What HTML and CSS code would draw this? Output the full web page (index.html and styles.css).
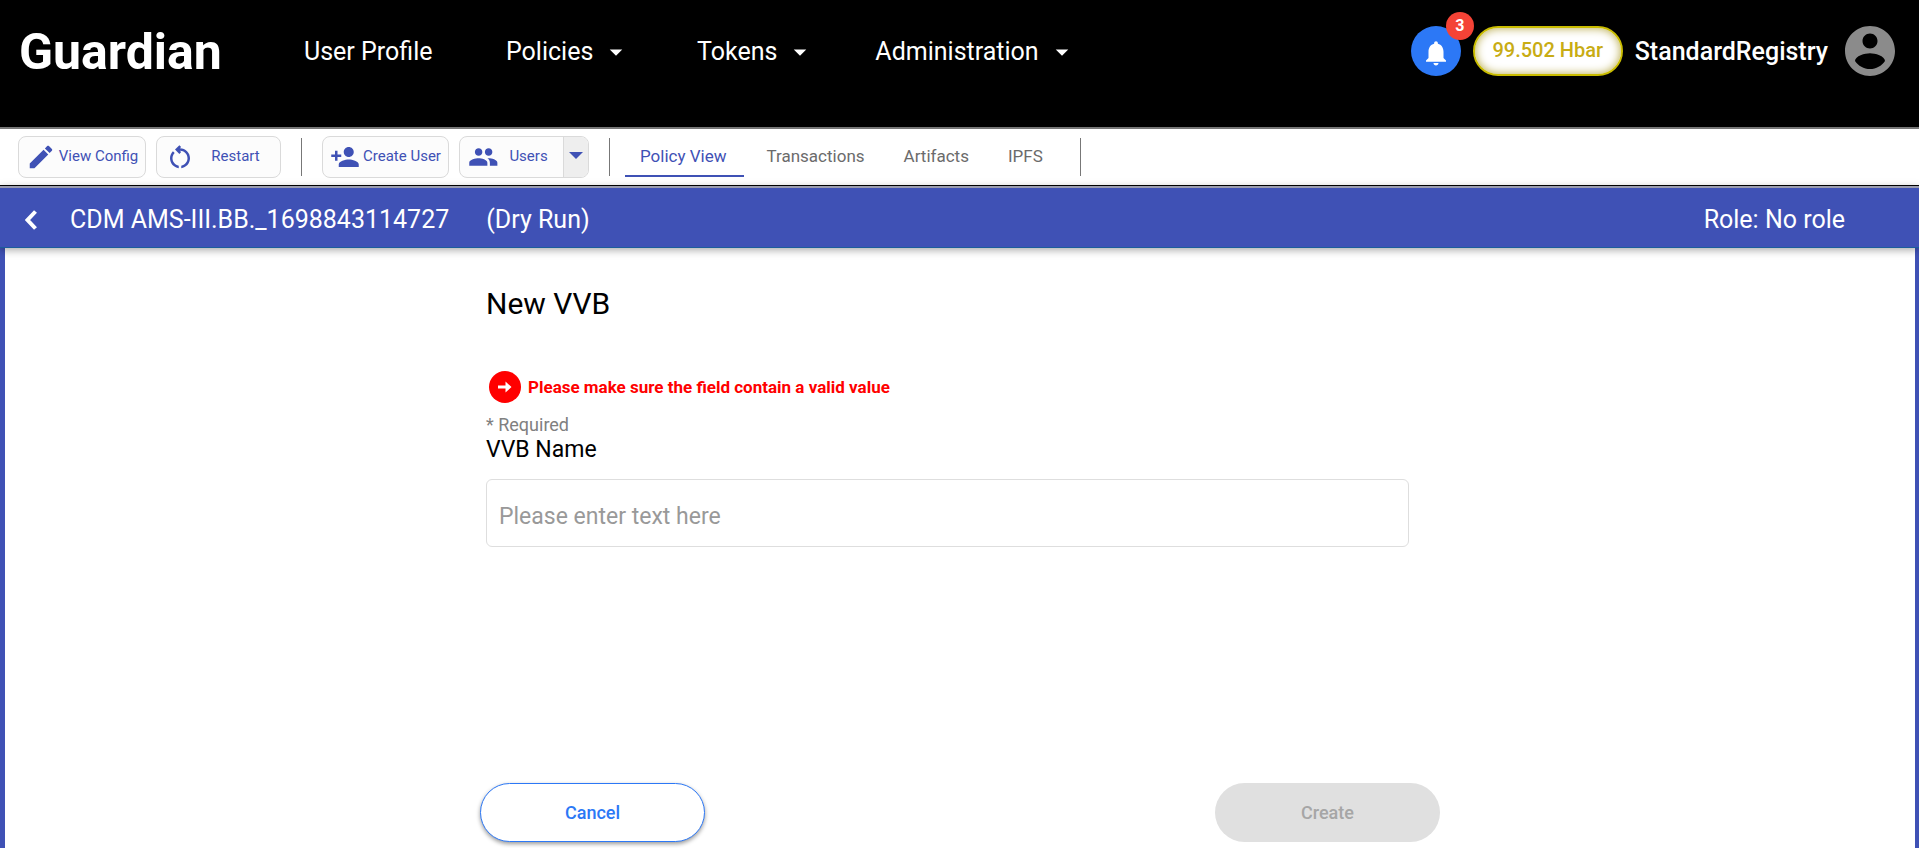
FILE: index.html
```html
<!DOCTYPE html>
<html lang="en">
<head>
<meta charset="utf-8">
<title>Guardian</title>
<link rel="stylesheet" href="styles.css">
</head>
<body>
<header class="header">
  <a class="logo" href="#">Guardian</a>
  <nav class="nav">
    <a class="nav-link nav-profile" href="#">User Profile</a>
    <button class="nav-link nav-policies" type="button">Policies<svg class="caret" viewBox="0 0 24 24"><path d="M7 10l5 5 5-5z"/></svg></button>
    <button class="nav-link" type="button">Tokens<svg class="caret" viewBox="0 0 24 24"><path d="M7 10l5 5 5-5z"/></svg></button>
    <button class="nav-link" type="button">Administration<svg class="caret" viewBox="0 0 24 24"><path d="M7 10l5 5 5-5z"/></svg></button>
  </nav>
  <div class="account">
    <button class="bell" type="button" aria-label="Notifications">
      <svg class="bell-icon" viewBox="0 0 24 24"><path d="M12 22c1.100 0 2-.900 2-2h-4c0 1.100.890 2 2 2zm6-6v-5c0-3.070-1.640-5.640-4.500-6.320V4c0-.830-.670-1.500-1.500-1.500s-1.500.670-1.500 1.500v.680C7.630 5.360 6 7.920 6 11v5l-2 2v1h16v-1l-2-2z"/></svg>
      <span class="badge">3</span>
    </button>
    <span class="balance">99.502 Hbar</span>
    <span class="username">StandardRegistry</span>
    <button class="avatar" type="button" aria-label="Profile">
      <svg viewBox="2 2 20 20"><path d="M12 2C6.480 2 2 6.480 2 12s4.480 10 10 10 10-4.480 10-10S17.520 2 12 2zm0 3c1.660 0 3 1.340 3 3s-1.340 3-3 3-3-1.340-3-3 1.340-3 3-3zm0 14.200c-2.500 0-4.710-1.280-6-3.220.030-1.990 4-3.080 6-3.080 1.990 0 5.970 1.090 6 3.080-1.290 1.940-3.500 3.220-6 3.220z"/></svg>
    </button>
  </div>
</header>

<div class="toolbar">
  <button class="tool tool-view" type="button"><svg class="tool-icon" viewBox="0 0 24 24"><path d="M3 17.250V21h3.750L17.810 9.940l-3.750-3.750L3 17.250zM20.710 7.040c.390-.390.390-1.020 0-1.410l-2.340-2.340c-.390-.390-1.020-.390-1.410 0l-1.830 1.830 3.750 3.750 1.830-1.830z"/></svg><span class="tool-text">View Config</span></button>
  <button class="tool tool-restart" type="button"><svg class="tool-icon" viewBox="0 0 24 24"><path d="M6 13c0-1.650.670-3.150 1.760-4.240L6.340 7.340C4.900 8.790 4 10.790 4 13c0 4.080 3.050 7.440 7 7.930v-2.020c-2.830-.480-5-2.940-5-5.910zm14 0c0-4.420-3.580-8-8-8-.060 0-.120.010-.180.010l1.090-1.090L11.500 2.500 8 6l3.500 3.500 1.410-1.410-1.080-1.080c.060 0 .120-.010.170-.010 3.310 0 6 2.690 6 6 0 2.970-2.170 5.430-5 5.910v2.020c3.950-.490 7-3.850 7-7.930z"/></svg><span class="tool-text">Restart</span></button>
  <span class="divider"></span>
  <button class="tool tool-create" type="button"><svg class="tool-icon" viewBox="0 0 24 24"><path d="M15 12c2.210 0 4-1.790 4-4s-1.790-4-4-4-4 1.790-4 4 1.790 4 4 4zm-9-2V7H4v3H1v2h3v3h2v-3h3v-2H6zm9 4c-2.670 0-8 1.340-8 4v2h16v-2c0-2.660-5.330-4-8-4z"/></svg><span class="tool-text">Create User</span></button>
  <div class="split">
    <button class="split-main" type="button"><svg class="tool-icon" viewBox="0 0 24 24"><path d="M16.500 11c1.660 0 2.990-1.340 2.990-3S18.160 5 16.500 5c-1.660 0-3 1.340-3 3s1.340 3 3 3zm-8 0c1.660 0 2.990-1.340 2.990-3S10.160 5 8.500 5c-1.660 0-3 1.340-3 3s1.340 3 3 3zm0 2C6.170 13 1 14.170 1 16.500V19h14.500v-2.500c0-2.330-4.670-3.500-7-3.500zm8 0c-.290 0-.620.020-.970.050 1.160.840 1.970 1.970 1.970 3.450V19h6v-2.500c0-2.330-4.670-3.500-7-3.500z"/></svg><span class="tool-text">Users</span></button>
    <button class="split-arrow" type="button" aria-label="More users"><svg viewBox="0 0 14 7"><path d="M0 0h14l-7 7z"/></svg></button>
  </div>
  <span class="divider"></span>
  <nav class="tabs">
    <a class="tab tab-active" href="#">Policy View</a>
    <a class="tab" href="#">Transactions</a>
    <a class="tab" href="#">Artifacts</a>
    <a class="tab" href="#">IPFS</a>
  </nav>
  <span class="divider"></span>
</div>

<div class="policy-bar">
  <button class="back" type="button" aria-label="Back"><svg viewBox="0 0 12 20"><path d="M10.500 1.500L2.500 10l8 8.500"/></svg></button>
  <span class="policy-name">CDM AMS-III.BB._1698843114727</span>
  <span>(Dry Run)</span>
  <span class="role">Role: No role</span>
</div>

<main class="content">
  <form class="form">
    <div class="fields">
      <h1 class="title">New VVB</h1>
      <div class="error">
        <svg class="error-icon" viewBox="0 0 32 32"><circle cx="16" cy="16" r="16" fill="#f00"/><path d="M9 14.500h7.500V10.500L22.500 16l-6 5.500v-4H9z" fill="#fff"/></svg>
        <span>Please make sure the field contain a valid value</span>
      </div>
      <span class="required">* Required</span>
      <label class="label" for="vvb-name">VVB Name</label>
      <input class="input" id="vvb-name" type="text" placeholder="Please enter text here">
    </div>
    <div class="actions">
      <button class="action action-cancel" type="button">Cancel</button>
      <button class="action action-create" type="submit" disabled>Create</button>
    </div>
  </form>
</main>
</body>
</html>
```
FILE: styles.css
```css
* { box-sizing: border-box; }

body {
  margin: 0;
  min-height: 100vh;
  display: flex;
  flex-direction: column;
  font-family: Roboto, sans-serif;
  color: #000;
  background: #fff;
}

button {
  font: inherit;
  color: inherit;
  background: none;
  border: 0;
  padding: 0;
}

a { color: inherit; text-decoration: none; }

svg { display: block; fill: currentColor; flex: none; }

.header {
  display: flex;
  align-items: flex-start;
  padding: 26px 24px 49px 19px;
  background: #000;
  color: #fff;
  font-size: 25px;
  line-height: 52px;
}

.logo { font-size: 50px; font-weight: 700; width: 285px; }

.nav { display: flex; gap: 60px; }

.nav-link { display: flex; align-items: center; gap: 8px; }
.nav-profile { min-width: 142px; }
.nav-policies { min-width: 131px; }

.caret { width: 30px; height: 30px; }

.account { display: flex; align-items: center; height: 50px; margin-left: auto; }

.bell {
  position: relative;
  display: flex;
  align-items: center;
  justify-content: center;
  width: 50px;
  height: 50px;
  margin-right: 12px;
  padding-top: 3px;
  border-radius: 50%;
  background: #2c78f6;
}

.bell-icon { width: 30px; height: 30px; }

.badge {
  position: absolute;
  top: -14px;
  right: -13px;
  width: 28px;
  height: 28px;
  border-radius: 50%;
  background: #f44336;
  font-size: 16px;
  font-weight: 700;
  line-height: 27px;
  text-align: center;
}

.balance {
  height: 50px;
  width: 150px;
  margin-right: 12px;
  border: 2px solid #c9bc00;
  border-radius: 25px;
  background: #fff;
  box-shadow: inset 0 0 10px #b5a642;
  color: #c8ac14;
  font-size: 20px;
  font-weight: 500;
  line-height: 44px;
  text-align: center;
}

.username { padding-top: 2px; margin-right: 17px; font-weight: 500; }

.avatar { width: 50px; height: 50px; color: #8b8b8b; }

.toolbar {
  display: flex;
  align-items: flex-start;
  height: 59px;
  padding: 7px 18px;
  border-top: 2px solid #777;
  border-bottom: 1px solid #000;
}

.tool,
.split {
  display: flex;
  align-items: center;
  height: 42px;
  border: 1px solid #dadada;
  border-radius: 8px;
  background: #fcfcfc;
  color: #3f51b5;
  font-size: 15px;
}

.tool { padding: 0 4px 0 7px; }
.tool-icon { width: 30px; height: 30px; }
.tool-text { flex: 1; text-align: center; padding-bottom: 3px; }

.tool-view { width: 128px; margin-right: 10px; }
.tool-restart { width: 125px; padding-left: 8px; }
.tool-create { width: 127px; margin-right: 10px; }

.split { width: 130px; overflow: hidden; }
.split-main { display: flex; flex: 1; align-items: center; padding: 0 4px 0 8px; }
.split-arrow {
  display: flex;
  align-items: center;
  justify-content: center;
  align-self: stretch;
  width: 25px;
  padding-bottom: 3px;
  border-left: 1px solid #dadada;
  background: #eee;
}
.split-arrow svg { width: 14px; height: 7px; }

.divider { width: 1px; height: 38px; margin: 2px 20px 0; background: #777; }

.tabs { display: flex; gap: 8px; margin: 0 1px 0 -5px; }

.tab {
  padding: 2px 16px 0 15px;
  border-bottom: 2px solid transparent;
  color: #6b6b6b;
  font-size: 17px;
  line-height: 37px;
}
.tab-active { padding-right: 17px; border-color: #3f51b5; color: #3f51b5; }

.policy-bar {
  position: relative;
  display: flex;
  align-items: center;
  height: 62px;
  padding: 4px 74px 0 25px;
  background: #3f51b5;
  border-top: 2px solid #9a9cae;
  border-bottom: 1px solid #1b5d9c;
  box-shadow: 0 2px 8px rgba(0, 0, 0, 0.35);
  color: #fff;
  font-size: 25px;
  line-height: 30px;
}

.back { margin-right: 33px; }
.back svg { width: 12px; height: 20px; fill: none; stroke: #fff; stroke-width: 4; }
.policy-name { margin-right: 37px; }
.role { margin-left: auto; }

.content {
  flex: 1;
  padding: 36px 16px 0;
  border: solid #3f51b5;
  border-width: 0 4px 0 5px;
}

.form { max-width: 960px; margin: 0 auto; }

.fields { display: flex; flex-direction: column; padding: 0 31px 0 6px; }

.title { margin: 0; font-size: 30px; font-weight: 400; line-height: 40px; }

.error {
  display: flex;
  align-items: center;
  gap: 7px;
  margin: 47px 0 10px 3px;
  color: #f00;
  font-size: 17px;
  font-weight: 700;
}
.error-icon { width: 32px; height: 32px; }

.required { color: #808080; font-size: 18px; line-height: 24px; }

.label { font-size: 23px; line-height: 26px; }

.input {
  height: 68px;
  margin-top: 16px;
  padding: 6px 12px 0;
  border: 1px solid #dedede;
  border-radius: 6px;
  background: #fff;
  font: 23px Roboto, sans-serif;
}
.input::placeholder { color: #999; opacity: 1; }

.actions { display: flex; justify-content: space-between; margin-top: 236px; }

.action {
  width: 225px;
  height: 59px;
  border-radius: 30px;
  font-size: 18px;
  font-weight: 500;
}
.action-cancel {
  border: 1px solid #2c78f6;
  background: #fff;
  box-shadow: 0 2px 4px rgba(0, 0, 0, 0.4);
  color: #2c78f6;
}
.action-create { background: #e0e0e0; color: #a6a6a6; }
```
